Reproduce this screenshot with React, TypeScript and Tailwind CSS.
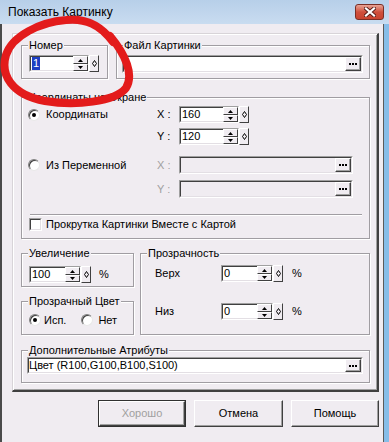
import React from "react";

const SO = "border border-t-[#a0a0a0] border-l-[#a0a0a0] border-r-white border-b-white";
const SI = "border border-t-[#404040] border-l-[#404040] border-r-[#e3dfe4] border-b-[#e3dfe4]";
const RB = "border border-t-white border-l-white border-r-[#404040] border-b-[#404040]";

function Tri({ down }: { down?: boolean }) {
  return (
    <svg width="5" height="3" viewBox="0 0 5 3" className="block">
      <path d={down ? "M0 0H5L2.5 3Z" : "M2.5 0L5 3H0Z"} fill="#000" />
    </svg>
  );
}

function Diamond() {
  return (
    <svg width="5" height="7" viewBox="0 0 5 7" className="block">
      <path d="M2.5 0.5L4.5 3.5L2.5 6.5L0.5 3.5Z" fill="none" stroke="#000" strokeWidth="1" />
    </svg>
  );
}

function Dots() {
  return (
    <svg width="8" height="2" viewBox="0 0 8 2" className="block">
      <rect x="0" y="0" width="2" height="2" fill="#000" />
      <rect x="3" y="0" width="2" height="2" fill="#000" />
      <rect x="6" y="0" width="2" height="2" fill="#000" />
    </svg>
  );
}

function SpinEdit({ value, w, selected }: { value: string; w: string; selected?: boolean }) {
  return (
    <div className="flex h-[17px]">
      <div className={`flex h-full ${w} ${SO}`}>
        <div className={`flex h-full flex-1 items-center bg-white pl-[1px] ${SI} border-r-0`}>
          {selected ? (
            <span className="bg-[#1e3fc2] px-[1px] text-white">{value}</span>
          ) : (
            <span>{value}</span>
          )}
        </div>
        <div className="flex h-full w-[15px] flex-col">
          <div className={`flex h-[8px] items-center justify-center bg-[#f0ecf1] ${RB}`}>
            <Tri />
          </div>
          <div className={`flex h-[7px] items-center justify-center bg-[#f0ecf1] ${RB}`}>
            <Tri down />
          </div>
        </div>
      </div>
      <div className={`flex h-full w-[10px] items-center justify-center bg-[#f0ecf1] ${RB}`}>
        <Diamond />
      </div>
    </div>
  );
}

function EllipsisEdit({ text, w, h, disabled }: { text?: string; w: string; h: string; disabled?: boolean }) {
  return (
    <div className={`${h} ${w} ${SO}`}>
      <div className={`flex h-full items-center ${disabled ? "bg-[#f0ecf1]" : "bg-white"} ${SI}`}>
        <div className="flex-1 overflow-hidden whitespace-nowrap">{text}</div>
        <div className={`flex h-full w-[16px] items-center justify-center bg-[#f0ecf1] ${RB} shadow-[inset_-1px_-1px_0_#a0a0a0]`}>
          <Dots />
        </div>
      </div>
    </div>
  );
}

function Group({ label, className, children }: { label: string; className: string; children?: React.ReactNode }) {
  return (
    <div className={`relative border border-[#a09da2] shadow-[1px_1px_0_#fff,inset_1px_1px_0_#fff] ${className}`}>
      <span className="absolute left-[6px] top-[-7px] bg-[#f0ecf1] px-[1px] leading-[13px] whitespace-nowrap">
        {label}
      </span>
      {children}
    </div>
  );
}

function Radio({ checked }: { checked?: boolean }) {
  return (
    <div className="flex h-[12px] w-[12px] shrink-0 items-center justify-center rounded-full border border-t-[#808080] border-l-[#808080] border-r-[#e8e8e8] border-b-[#e8e8e8] bg-white shadow-[inset_1px_1px_0_#404040]">
      {checked && <div className="h-[4px] w-[4px] rounded-full bg-black" />}
    </div>
  );
}

function Checkbox() {
  return (
    <div className={`h-[13px] w-[13px] shrink-0 ${SO}`}>
      <div className={`h-full w-full bg-white ${SI}`} />
    </div>
  );
}

function Btn({ label, w, disabled, def }: { label: string; w: string; disabled?: boolean; def?: boolean }) {
  return (
    <div className={`h-[27px] ${w} ${def ? "border border-[#303030]" : ""}`}>
      <div
        className={`flex h-full w-full items-center justify-center bg-[#f0ecf1] ${RB} shadow-[inset_-1px_-1px_0_#a0a0a0] ${
          disabled ? "text-[#a0a0a0]" : "text-black"
        }`}
      >
        {label}
      </div>
    </div>
  );
}

export default function App() {
  return (
    <div className="relative h-[442px] w-[389px] overflow-hidden bg-[#86bde8] font-['Liberation_Sans',Arial,sans-serif] text-[11px] leading-[13px] text-black">
      {/* title bar */}
      <div className="flex h-[24px] items-start bg-gradient-to-b from-[#b7cfe9] to-[#c9dcf0]">
        <div className="ml-[8px] mt-[5px] text-[12px] leading-[15px]">Показать Картинку</div>
        <div className="ml-auto mr-[5px] mt-[4px] flex h-[16px] w-[29px] items-center justify-center rounded-[3px] border border-[#7a2e25] bg-gradient-to-b from-[#e8a395] via-[#cf4f3c] to-[#c9432f]">
          <svg width="12" height="10" viewBox="0 0 12 10" className="block">
            <path d="M2 1.5L10 8.5M10 1.5L2 8.5" stroke="#5a1e18" strokeWidth="4" strokeLinecap="square" />
            <path d="M2 1.5L10 8.5M10 1.5L2 8.5" stroke="#fff" strokeWidth="2.2" strokeLinecap="square" />
          </svg>
        </div>
      </div>

      {/* client area */}
      <div className="mr-[5px] h-[418px] border-l-2 border-r border-l-[#4a4a4a] border-r-[#5a5a5a] bg-[#f0ecf1] pt-[9px]">
        {/* outer panel */}
        <div className="ml-[10px] h-[359px] w-[367px] border-t border-l border-r-2 border-b-2 border-t-[#d8d4d8] border-l-[#d8d4d8] border-r-[#404040] border-b-[#404040] pl-[8px] pt-[11px] shadow-[inset_1px_1px_0_#fff,inset_-1px_-1px_0_#a0a0a0]">
          {/* row 1 */}
          <div className="flex gap-[8px]">
            <Group label="Номер" className="h-[34px] w-[87px] pl-[7px] pt-[9px]">
              <SpinEdit value="1" w="w-[60px]" selected />
            </Group>
            <Group label="Файл Картинки" className="h-[34px] w-[254px] pl-[5px] pt-[9px]">
              <EllipsisEdit w="w-[241px]" h="h-[18px]" />
            </Group>
          </div>

          {/* coords */}
          <Group label="Координаты на Экране" className="mt-[18px] h-[142px] w-[349px]">
            <div className="flex flex-col pl-[6px] pt-[8px]">
              <div className="flex h-[17px] items-center">
                <div className="flex w-[129px] items-center">
                  <Radio checked />
                  <span className="ml-[6px]">Координаты</span>
                </div>
                <span className="w-[22px]">X :</span>
                <SpinEdit value="160" w="w-[60px]" />
              </div>
              <div className="mt-[5px] flex h-[17px] items-center">
                <div className="w-[129px]" />
                <span className="w-[22px]">Y :</span>
                <SpinEdit value="120" w="w-[60px]" />
              </div>
              <div className="mt-[11px] flex h-[18px] items-center">
                <div className="flex w-[129px] items-center">
                  <Radio />
                  <span className="ml-[6px]">Из Переменной</span>
                </div>
                <span className="w-[22px] text-[#a0a0a0]">X :</span>
                <EllipsisEdit w="w-[174px]" h="h-[18px]" disabled />
              </div>
              <div className="mt-[6px] flex h-[18px] items-center">
                <div className="w-[129px]" />
                <span className="w-[22px] text-[#a0a0a0]">Y :</span>
                <EllipsisEdit w="w-[174px]" h="h-[18px]" disabled />
              </div>
              <div className="ml-[2px] mt-[16px] h-[2px] w-[332px] border-t border-b border-t-[#a09da2] border-b-white" />
              <div className="ml-[1px] mt-[2px] flex items-center">
                <Checkbox />
                <span className="ml-[4px]">Прокрутка Картинки Вместе с Картой</span>
              </div>
            </div>
          </Group>

          {/* row 3 */}
          <div className="mt-[14px] flex">
            <div className="flex w-[113px] flex-col">
              <Group label="Увеличение" className="h-[34px] w-[113px] pl-[7px] pt-[12px]">
                <div className="flex items-center">
                  <SpinEdit value="100" w="w-[52px]" />
                  <span className="ml-[8px]">%</span>
                </div>
              </Group>
              <Group label="Прозрачный Цвет" className="mt-[14px] h-[34px] w-[113px] pl-[7px] pt-[12px]">
                <div className="flex h-[12px] items-center">
                  <Radio checked />
                  <span className="ml-[3px]">Исп.</span>
                  <div className="ml-[15px]">
                    <Radio />
                  </div>
                  <span className="ml-[5px]">Нет</span>
                </div>
              </Group>
            </div>
            <Group label="Прозрачность" className="ml-[6px] h-[82px] w-[230px] pl-[14px] pt-[11px]">
              <div className="flex h-[17px] items-center">
                <span className="w-[66px]">Верх</span>
                <SpinEdit value="0" w="w-[52px]" />
                <span className="ml-[9px]">%</span>
              </div>
              <div className="mt-[21px] flex h-[17px] items-center">
                <span className="w-[66px]">Низ</span>
                <SpinEdit value="0" w="w-[52px]" />
                <span className="ml-[9px]">%</span>
              </div>
            </Group>
          </div>

          {/* extra attrs */}
          <Group label="Дополнительные Атрибуты" className="mt-[15px] h-[33px] w-[349px] pl-[5px] pt-[6px]">
            <EllipsisEdit text="Цвет (R100,G100,B100,S100)" w="w-[336px]" h="h-[17px]" />
          </Group>
        </div>

        {/* buttons */}
        <div className="ml-[96px] mt-[8px] flex gap-[8px]">
          <Btn label="Хорошо" w="w-[88px]" disabled def />
          <Btn label="Отмена" w="w-[89px]" />
          <Btn label="Помощь" w="w-[88px]" />
        </div>
      </div>

      {/* red hand-drawn annotation */}
      <svg className="pointer-events-none absolute left-0 top-0" width="389" height="442" viewBox="0 0 389 442">
        <path
          d="M113 42 C100 24, 85 18, 66 20 C40 22, 12 36, 6 55 C0 75, 12 95, 45 101 C75 106, 115 102, 126 88 C134 75, 126 55, 110 36"
          fill="none"
          stroke="#e31b1b"
          strokeWidth="8"
          strokeLinecap="round"
          strokeLinejoin="round"
        />
      </svg>
    </div>
  );
}
